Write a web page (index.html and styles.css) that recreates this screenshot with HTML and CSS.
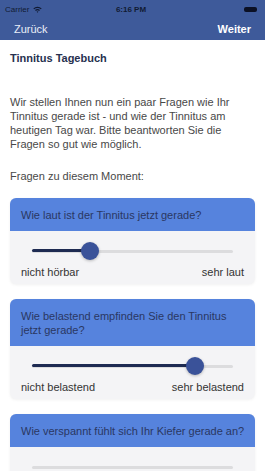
FILE: index.html
```html
<!DOCTYPE html>
<html lang="de">
<head>
    <meta charset="UTF-8">
    <title>Tinnitus Tagebuch</title>
    <link rel="stylesheet" href="styles.css">
</head>
<body>
<div id="top">
    <!--statusbar-->
    <div class="status">
        <span class="carrier">Carrier
            <svg class="wifi" width="9" height="7" viewBox="0 0 9 7"><path d="M0.3 2.4A6 6 0 0 1 8.7 2.4L7.8 3.3A4.7 4.7 0 0 0 1.2 3.3Z M2 4.1A3.6 3.6 0 0 1 7 4.1L6.1 5A2.3 2.3 0 0 0 2.9 5Z M3.6 5.7A1.3 1.3 0 0 1 5.4 5.7L4.5 6.7Z" fill="#111a33"/></svg>
        </span>
        <span class="clock">6:16 PM</span>
        <span class="battery"></span>
    </div>
    <div class="nav">
        <span class="back">Zurück</span>
        <span class="next">Weiter</span>
    </div>
</div>

<div id="content">
    <h3 class="title">Tinnitus Tagebuch</h3>
    <p class="intro">Wir stellen Ihnen nun ein paar Fragen wie Ihr Tinnitus gerade ist - und wie der Tinnitus am heutigen Tag war. Bitte beantworten Sie die Fragen so gut wie möglich.</p>
    <p class="sub">Fragen zu diesem Moment:</p>

    <div class="card">
        <div class="card_head">Wie laut ist der Tinnitus jetzt gerade?</div>
        <div class="card_body">
            <div class="slider"><span class="fill" style="width:29%"></span><span class="knob" style="left:29%"></span></div>
            <div class="labels"><span>nicht hörbar</span><span>sehr laut</span></div>
        </div>
    </div>

    <div class="card">
        <div class="card_head">Wie belastend empfinden Sie den Tinnitus jetzt gerade?</div>
        <div class="card_body">
            <div class="slider"><span class="fill" style="width:81%"></span><span class="knob" style="left:81%"></span></div>
            <div class="labels"><span>nicht belastend</span><span>sehr belastend</span></div>
        </div>
    </div>

    <div class="card">
        <div class="card_head nowrap">Wie verspannt fühlt sich Ihr Kiefer gerade an?</div>
        <div class="card_body">
            <div class="slider"><span class="fill" style="width:0"></span></div>
        </div>
    </div>
</div>
</body>
</html>
```

FILE: styles.css
```css
*{
    margin: 0;
    padding: 0;
    box-sizing: border-box;
}
body{
    font-family: "Liberation Sans", Arial, sans-serif;
    background: #fff;
    width: 265px;
    height: 471px;
    overflow: hidden;
}
#top{
    background: #3e5a9a;
}
.status{
    height: 20px;
    display: flex;
    align-items: center;
    justify-content: space-between;
    padding: 0 8px 2px 5px;
    font-size: 8px;
    color: #111a33;
}
.carrier{
    display: flex;
    align-items: center;
    gap: 4px;
    width: 60px;
}
.clock{
    font-weight: bold;
}
.battery{
    width: 60px;
    display: flex;
    justify-content: flex-end;
}
.battery::after{
    content: "";
    width: 13px;
    height: 5px;
    border-radius: 2px;
    background: #0b1024;
}
.nav{
    height: 20px;
    display: flex;
    align-items: center;
    justify-content: space-between;
    padding: 0 14px 3px 14px;
    font-size: 11px;
    color: #e9eef8;
}
.next{
    font-weight: bold;
    color: #fff;
}
#content{
    padding: 12px 10px 0;
}
.title{
    font-size: 11px;
    color: #27314f;
    line-height: 12px;
}
.intro{
    margin-top: 31px;
    font-size: 11px;
    line-height: 14px;
    color: #484848;
}
.sub{
    margin-top: 18px;
    font-size: 11px;
    line-height: 14px;
    color: #484848;
}
.card{
    margin-top: 15px;
    border-radius: 6px;
    overflow: hidden;
    background: #f4f4f6;
    box-shadow: 0 1px 3px rgba(0,0,0,0.06);
}
.card_head{
    background: #5683dd;
    color: #2a3762;
    font-size: 11px;
    line-height: 14px;
    padding: 10px 11px 9px;
}
.card_head.nowrap{
    white-space: nowrap;
    padding-right: 0;
}
.card_body{
    padding: 11px 11px 5px;
}
.slider{
    position: relative;
    height: 18px;
    margin: 0 11px;
    display: flex;
    align-items: center;
}
.slider::before{
    content: "";
    width: 100%;
    height: 3px;
    border-radius: 2px;
    background: #dcdcde;
}
.fill{
    position: absolute;
    left: 0;
    top: 7px;
    height: 3px;
    border-radius: 2px;
    background: #1e2b52;
}
.knob{
    position: absolute;
    top: 0;
    width: 18px;
    height: 18px;
    margin-left: -9px;
    border-radius: 50%;
    background: #3a5299;
    box-shadow: 0 1px 3px rgba(0,0,0,0.25);
}
.labels{
    margin-top: 5px;
    display: flex;
    justify-content: space-between;
    font-size: 11px;
    line-height: 14px;
    color: #333;
}
```
